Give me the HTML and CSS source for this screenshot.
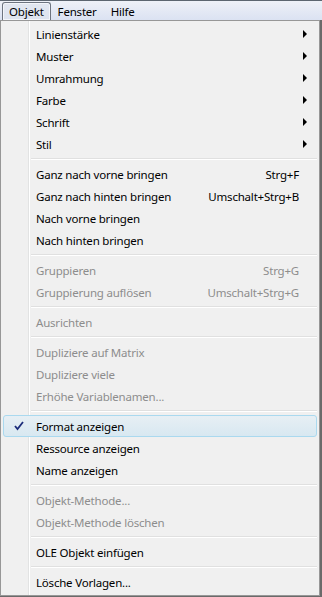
FILE: index.html
```html
<!DOCTYPE html>
<html lang="de">
<head>
<meta charset="utf-8">
<title>Objekt-Menü</title>
<link rel="stylesheet" href="styles.css">
</head>
<body>
<div class="menubar">
  <span class="mb-item active">Objekt</span>
  <span class="mb-item">Fenster</span>
  <span class="mb-item">Hilfe</span>
</div>
<div class="menu">
  <div class="item"><span class="label">Linienstärke</span><span class="arrow"></span></div>
  <div class="item"><span class="label">Muster</span><span class="arrow"></span></div>
  <div class="item"><span class="label">Umrahmung</span><span class="arrow"></span></div>
  <div class="item"><span class="label">Farbe</span><span class="arrow"></span></div>
  <div class="item"><span class="label">Schrift</span><span class="arrow"></span></div>
  <div class="item"><span class="label">Stil</span><span class="arrow"></span></div>
  <div class="sep"></div>
  <div class="item"><span class="label">Ganz nach vorne bringen</span><span class="key">Strg+F</span></div>
  <div class="item"><span class="label">Ganz nach hinten bringen</span><span class="key">Umschalt+Strg+B</span></div>
  <div class="item"><span class="label">Nach vorne bringen</span></div>
  <div class="item"><span class="label">Nach hinten bringen</span></div>
  <div class="sep"></div>
  <div class="item disabled"><span class="label">Gruppieren</span><span class="key">Strg+G</span></div>
  <div class="item disabled"><span class="label">Gruppierung auflösen</span><span class="key">Umschalt+Strg+G</span></div>
  <div class="sep"></div>
  <div class="item disabled"><span class="label">Ausrichten</span></div>
  <div class="sep"></div>
  <div class="item disabled"><span class="label">Dupliziere auf Matrix</span></div>
  <div class="item disabled"><span class="label">Dupliziere viele</span></div>
  <div class="item disabled"><span class="label">Erhöhe Variablenamen...</span></div>
  <div class="sep"></div>
  <div class="item checked hover">
    <svg class="check" width="10" height="10" viewBox="0 0 10 10"><path d="M1 5 L3.5 8 L9 1" fill="none" stroke="#1c2c7a" stroke-width="1.8"/></svg>
    <span class="label">Format anzeigen</span>
  </div>
  <div class="item"><span class="label">Ressource anzeigen</span></div>
  <div class="item"><span class="label">Name anzeigen</span></div>
  <div class="sep"></div>
  <div class="item disabled"><span class="label">Objekt-Methode...</span></div>
  <div class="item disabled"><span class="label">Objekt-Methode löschen</span></div>
  <div class="sep"></div>
  <div class="item"><span class="label">OLE Objekt einfügen</span></div>
  <div class="sep"></div>
  <div class="item"><span class="label">Lösche Vorlagen...</span></div>
</div>
</body>
</html>
```
FILE: styles.css
```css
html, body {
  margin: 0;
  padding: 0;
}
body {
  width: 322px;
  height: 597px;
  overflow: hidden;
  background: #6a6a6a;
  font-family: "Noto Sans", "Open Sans", sans-serif;
  font-size: 11.5px;
  letter-spacing: -0.2px;
  color: #000;
}
.menubar {
  height: 19px;
  border-top: 1px solid #5c6570;
  background: linear-gradient(#eef1f8 0, #e8ecf6 30%, #dbe2f2 100%);
  display: flex;
  align-items: stretch;
  padding-left: 2px;
  box-sizing: content-box;
}
.mb-item {
  display: flex;
  align-items: center;
  padding: 0 6px;
  line-height: 17px;
  margin-top: 1px;
  height: 17px;
  border: 1px solid transparent;
  border-bottom: none;
}
.mb-item.active {
  border-color: #6d7480;
  border-radius: 3px 3px 0 0;
  background: linear-gradient(#e2e7f1, #dde3ef);
  box-shadow: inset 0 0 0 1px #f3f5fa;
}
.menu {
  width: 314px;
  padding: 2px;
  border: 1px solid #979797;
  background: linear-gradient(to right, transparent 27px, #e2e3e3 27px, #e2e3e3 28px, #ffffff 28px, #ffffff 29px, transparent 29px), #f0f0f0;
  display: flex;
  flex-direction: column;
}
.item {
  height: 22px;
  display: flex;
  align-items: center;
  padding-left: 32px;
  padding-right: 8px;
  border: 1px solid transparent;
  border-radius: 3px;
  box-sizing: border-box;
  position: relative;
}
.item .label {
  flex: 1;
  white-space: nowrap;
}
.item .key {
  white-space: nowrap;
  margin-right: 9px;
}
.item.disabled {
  color: #8d8d8d;
}
.arrow {
  width: 0;
  height: 0;
  border-top: 4px solid transparent;
  border-bottom: 4px solid transparent;
  border-left: 4px solid #000;
  margin-right: 1px;
}
.item.hover {
  border-color: #aad9ef;
  background: linear-gradient(#e7eff4, #d8e8f1);
}
.check {
  position: absolute;
  left: 10px;
  top: 5px;
}
.sep {
  height: 8px;
  margin-left: 28px;
  background: linear-gradient(transparent 3px, #e0e0e0 3px, #e0e0e0 4px, #ffffff 4px, #ffffff 5px, transparent 5px);
}
```
